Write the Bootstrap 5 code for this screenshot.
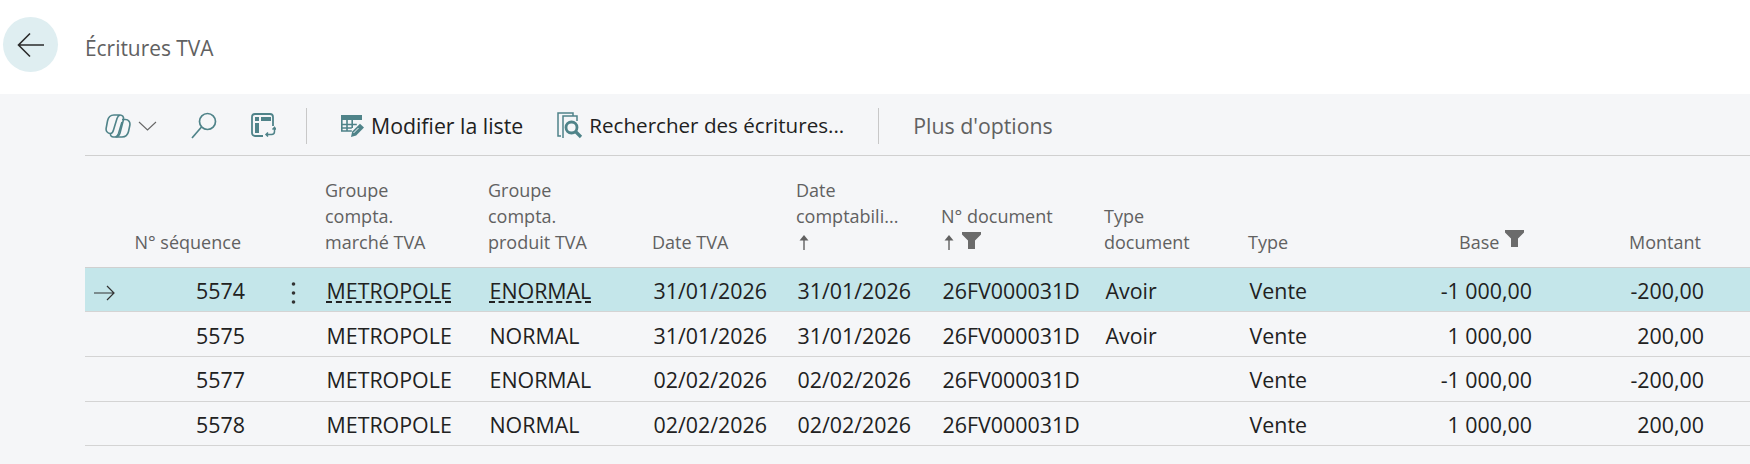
<!DOCTYPE html>
<html lang="fr">
<head>
<meta charset="UTF-8">
<title>Écritures TVA</title>
<link rel="stylesheet" href="https://cdn.jsdelivr.net/npm/bootstrap@5.3.0/dist/css/bootstrap.min.css">
<style>
html, body { height: 464px; overflow: hidden; }
body { background: #f5f6f8; color: #212121; font-family: "Open Sans", "Noto Sans", sans-serif; }
.top-bar { height: 94px; background: #fff; padding-left: 3px; }
.back-btn { width: 55px; height: 55px; margin-top: -5px; border-radius: 50%; background: #dfeef1; border: 0; padding: 0; }
.page-title { margin: 3px 0 0 27px; font-size: 20.9px; color: #616161; font-weight: 400; }
.tool-bar { height: 62px; margin-left: 85px; padding-top: 2px; border-bottom: 1px solid #d0d0d0; color: #212121; font-size: 21px; }
.tool-sep { width: 1px; height: 36px; background: #c8c8c8; }
.tool-item { border: 0; background: none; padding: 0; color: inherit; font-size: inherit; white-space: nowrap; }
.tool-item svg { display: block; }
.muted-item { color: #616161; }
.t-copilot { margin-left: 20px; }
.t-chevron { margin-left: 7px; }
.t-search { margin-left: 34px; }
.t-layout { margin-left: 34px; }
.t-sep1 { margin-left: 30px; }
.t-edit { margin-left: 33px; font-size: 21.3px; }
.t-edit svg { margin-right: 6px; }
.t-find { margin-left: 34px; font-size: 20.6px; }
.t-find svg { margin-right: 6px; }
.t-sep2 { margin-left: 34px; }
.t-more { margin-left: 34px; font-size: 21.3px; }
.lines-wrap { margin-left: 85px; }
.lines-table { table-layout: fixed; width: 1665px; margin: 0; --bs-table-bg: transparent; --bs-table-color: #212121; }
.lines-table th { height: 111px; padding: 0 0 12px; border-bottom: 1px solid #d0d0d0; vertical-align: bottom; font-weight: 400; font-size: 18px; line-height: 26px; color: #616161; }
.lines-table td { height: 44.7px; padding: 3px 0 0 1.5px; border-bottom: 1px solid #d4d4d4; vertical-align: middle; font-size: 21.4px; line-height: 28px; white-space: nowrap; }
.lines-table tr.current td { background: #c4e6ea; }
.lines-table td.seq-cell { padding-right: 5px; }
.lines-table th.seq-cell { padding-right: 9px; }
.lines-table td.money-cell { padding-right: 4px; }
.lines-table th.money-cell { padding-right: 7px; }
.lines-table th.base-cell { padding-right: 12px; }
.lines-table .marker-cell { padding-left: 9px; }
.lines-table .dots-cell { padding-left: 41px; }
.w-35 { width: 35px; } .w-130 { width: 130px; } .w-75 { width: 75px; } .w-163 { width: 163px; }
.w-164 { width: 164px; } .w-144 { width: 144px; } .w-145 { width: 145px; } .w-152 { width: 152px; }
.w-136 { width: 136px; } .w-172 { width: 172px; } .w-42 { width: 42px; }
.link-val { text-decoration: underline dashed 1.500px; text-underline-offset: 3px; }
.head-arrow { display: inline-block; vertical-align: -1px; margin-left: 3px; }
.head-funnel { display: inline-block; vertical-align: 0; margin-left: 8px; }
.base-cell .head-funnel { vertical-align: 2px; margin-left: 1px; }
</style>
</head>
<body>

<div class="top-bar d-flex align-items-center">
  <button class="back-btn d-flex align-items-center justify-content-center" aria-label="Retour">
    <svg width="28" height="26" viewBox="0 0 28 26" fill="none" stroke="#2b2b2b" stroke-width="1.600"><path d="M27 13H2M13 1.500 1.500 13 13 24.500"/></svg>
  </button>
  <h1 class="page-title">Écritures TVA</h1>
</div>

<div class="tool-bar d-flex align-items-center">
  <button class="tool-item t-copilot" aria-label="Copilot">
    <svg width="26" height="24" viewBox="0 0 26 24" fill="none" stroke="#4f8389" stroke-width="1.600"><path d="M9 1h6c-1.500.5-2.500 2-3 3.500L8.500 16c-.5 2-1.500 3.500-3 3.500C2.500 19.500.6 17 1.200 14L2.500 7C3.300 3 5.500 1 9 1z"/><path d="M17 5.500h3.500c3 0 5 2.500 4.300 6l-1.300 6c-.8 3.500-3 5.500-6.500 5.500H10.500c1.500-.5 2.500-2 3-3.500L17 8"/><path d="M15 1c2.500 0 4 2 3.500 4.500L15 19c-.7 2.500-2.500 4-5 4H8.500c-2 0-3.500-1.500-3-3.500"/></svg>
  </button>
  <button class="tool-item t-chevron" aria-label="Menu">
    <svg width="19" height="10" viewBox="0 0 19 10" fill="none" stroke="#666" stroke-width="1.100"><path d="M1 1l8.500 8L18 1"/></svg>
  </button>
  <button class="tool-item t-search" aria-label="Rechercher">
    <svg width="26" height="27" viewBox="0 0 26 27" fill="none" stroke="#4f8389" stroke-width="1.700"><circle cx="16.500" cy="9.500" r="8"/><path d="M10.500 15 1 26"/></svg>
  </button>
  <button class="tool-item t-layout" aria-label="Disposition">
    <svg width="25" height="25" viewBox="0 0 25 25"><path fill="none" stroke="#4f8389" stroke-width="1.800" d="M12 23H4a3 3 0 0 1-3-3V4a3 3 0 0 1 3-3h15a3 3 0 0 1 3 3v9"/><path fill="#4f8389" d="M4 4h4v4H4zM10 4h10v4H10zM4 10h4v10H4z"/><path fill="none" stroke="#4f8389" stroke-width="1.500" d="M23.500 15v3.500a3 3 0 0 1-3 3H15M21.500 16.500l2-2 1.500 2M17 19.500l-2 2 2 2"/></svg>
  </button>
  <div class="tool-sep t-sep1"></div>
  <button class="tool-item t-edit d-flex align-items-center">
    <svg width="25" height="25" viewBox="0 0 25 25"><path fill="#4f8389" d="M1 2h21v5H1z"/><path fill="none" stroke="#4f8389" stroke-width="1.600" d="M1.800 7v11h10M1.800 11.500h15M1.800 15h10M7 7v11M12.200 7v8"/><path fill="#4f8389" d="M11 24l1.200-5.500L20 10.700l4 3.800-7.800 8z"/><path stroke="#f5f6f8" stroke-width="1" d="M13.500 20l5-5"/></svg>
    Modifier la liste
  </button>
  <button class="tool-item t-find d-flex align-items-center">
    <svg width="26" height="27" viewBox="0 0 26 27" fill="none" stroke="#4f8389"><path stroke-width="1.500" d="M4 24H1V1h15v3"/><path stroke-width="1.500" d="M6 26V4h14v5"/><circle stroke-width="2.800" cx="14.500" cy="15.500" r="5.500"/><path stroke-width="3.200" d="M18.500 19.500l5.500 5.500"/></svg>
    Rechercher des écritures...
  </button>
  <div class="tool-sep t-sep2"></div>
  <button class="tool-item muted-item t-more">Plus d'options</button>
</div>

<div class="lines-wrap">
  <table class="table lines-table">
    <colgroup>
      <col class="w-35"><col class="w-130"><col class="w-75">
      <col class="w-163"><col class="w-164"><col class="w-144">
      <col class="w-145"><col class="w-163"><col class="w-144">
      <col class="w-152"><col class="w-136"><col class="w-172"><col class="w-42">
    </colgroup>
    <thead>
      <tr>
        <th></th>
        <th class="seq-cell text-end">N° séquence</th>
        <th></th>
        <th>Groupe<br>compta.<br>marché TVA</th>
        <th>Groupe<br>compta.<br>produit TVA</th>
        <th>Date TVA</th>
        <th>Date<br>comptabili...<br><svg class="head-arrow" width="10" height="15" viewBox="0 0 10 15"><path fill="none" stroke="#616161" stroke-width="1.400" d="M5 15V4"/><path fill="#616161" d="M5 0l4.500 5.500h-9z"/></svg></th>
        <th>N° document<br><svg class="head-arrow" width="10" height="15" viewBox="0 0 10 15"><path fill="none" stroke="#616161" stroke-width="1.400" d="M5 15V4"/><path fill="#616161" d="M5 0l4.500 5.500h-9z"/></svg><svg class="head-funnel" width="19" height="17" viewBox="0 0 19 17" fill="#6b6b6b"><path d="M0 0h19v2.500L13 8.500V17H6V8.500L0 2.500z"/></svg></th>
        <th>Type<br>document</th>
        <th>Type</th>
        <th class="base-cell text-end">Base <svg class="head-funnel" width="19" height="17" viewBox="0 0 19 17" fill="#6b6b6b"><path d="M0 0h19v2.500L13 8.500V17H6V8.500L0 2.500z"/></svg></th>
        <th class="money-cell text-end">Montant</th>
        <th></th>
      </tr>
    </thead>
    <tbody id="lines"></tbody>
  </table>
</div>

<script src="https://cdn.jsdelivr.net/npm/bootstrap@5.3.0/dist/js/bootstrap.bundle.min.js"></script>
<script>
  const lines = [
    { seq: 5574, grp: 'ENORMAL', date: '31/01/2026', type: 'Avoir', base: '-1 000,00', amt: '-200,00' },
    { seq: 5575, grp: 'NORMAL', date: '31/01/2026', type: 'Avoir', base: '1 000,00', amt: '200,00' },
    { seq: 5577, grp: 'ENORMAL', date: '02/02/2026', type: '', base: '-1 000,00', amt: '-200,00' },
    { seq: 5578, grp: 'NORMAL', date: '02/02/2026', type: '', base: '1 000,00', amt: '200,00' }
  ];
  let rows = '';
  lines.map((val, i) => {
    const cur = i === 0;
    rows += `
      <tr class="${cur ? 'current' : ''}">
        <td class="marker-cell">${cur ? '<svg width="21" height="16" viewBox="0 0 21 16" fill="none" stroke="#333" stroke-width="1.200"><path d="M0 8h20M13 1l7 7-7 7"/></svg>' : ''}</td>
        <td class="seq-cell text-end">${val.seq}</td>
        <td class="dots-cell">${cur ? '<svg width="5" height="24" viewBox="0 0 5 24" fill="#333"><circle cx="2.500" cy="3" r="1.800"/><circle cx="2.500" cy="12" r="1.800"/><circle cx="2.500" cy="21" r="1.800"/></svg>' : ''}</td>
        <td><span class="${cur ? 'link-val' : ''}">METROPOLE</span></td>
        <td><span class="${cur ? 'link-val' : ''}">${val.grp}</span></td>
        <td>${val.date}</td>
        <td>${val.date}</td>
        <td>26FV000031D</td>
        <td>${val.type}</td>
        <td>Vente</td>
        <td class="money-cell text-end">${val.base}</td>
        <td class="money-cell text-end">${val.amt}</td>
        <td></td>
      </tr>`;
  });
  document.getElementById('lines').innerHTML = rows;
</script>
</body>
</html>
